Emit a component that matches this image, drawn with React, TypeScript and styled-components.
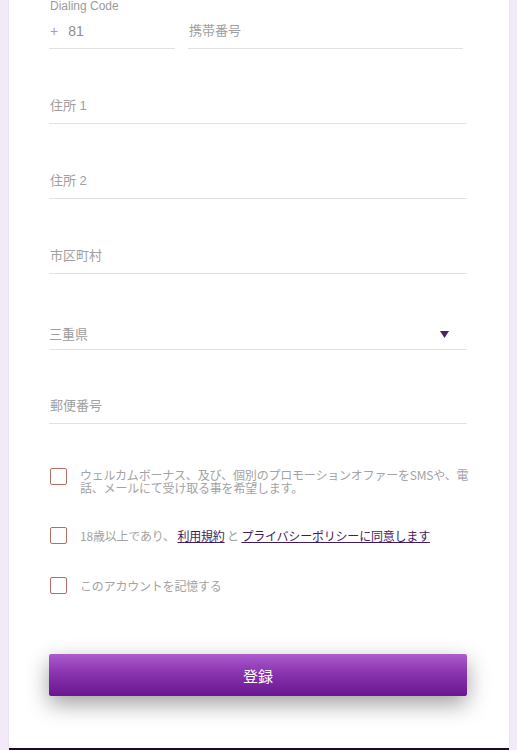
import styled, { createGlobalStyle } from 'styled-components';

const GlobalStyle = createGlobalStyle`
  html, body {
    margin: 0;
    padding: 0;
    background: #f3eaf9;
  }
  body {
    font-family: "Liberation Sans", "Noto Sans CJK JP", sans-serif;
    overflow: hidden;
  }
`;

const Panel = styled.div`
  margin: -1px 8px 0 9px;
  background: #ffffff;
  padding: 0 42px 52px 40px;
  box-shadow: 0 0 2px rgba(120, 80, 150, 0.15);
`;

const Footer = styled.div`
  margin: 0 8px 0 9px;
  height: 20px;
  background: #1b0b26;
`;

const Form = styled.form`
  display: flex;
  flex-direction: column;
`;

const SmallLabel = styled.div`
  font-size: 12px;
  line-height: 14px;
  color: #9b9b9b;
  padding-left: 1px;
`;

const PhoneRow = styled.div`
  display: flex;
  gap: 13px;
  width: 414px;
`;

const Field = styled.div<{ $width?: number; $top?: number }>`
  position: relative;
  display: flex;
  align-items: center;
  height: 36px;
  min-width: 0;
  margin-top: ${(p) => p.$top ?? 39}px;
  box-sizing: border-box;
  border-bottom: 1px solid #e3e1e4;
  flex: ${(p) => (p.$width ? `0 0 ${p.$width}px` : '1 1 auto')};
`;

const Prefix = styled.span`
  font-size: 14px;
  color: #a3a3a3;
  padding: 0 9px 0 1px;
`;

const Input = styled.input<{ $filled?: boolean }>`
  flex: 1;
  min-width: 0;
  width: 0;
  border: none;
  outline: none;
  background: transparent;
  padding: 0 0 0 1px;
  font-family: "Liberation Sans", "Noto Sans CJK JP", sans-serif;
  font-size: ${(p) => (p.$filled ? 14 : 13)}px;
  color: #8f8f8f;
  &::placeholder {
    color: #a0a0a0;
  }
`;

const Select = styled.select`
  flex: 1;
  appearance: none;
  border: none;
  outline: none;
  background: transparent;
  padding: 5px 0 0 0;
  font-family: "Liberation Sans", "Noto Sans CJK JP", sans-serif;
  font-size: 13px;
  color: #9d9d9d;
`;

const Arrow = styled.svg`
  position: absolute;
  right: 18px;
  top: 17px;
  pointer-events: none;
`;

const Checks = styled.div`
  display: flex;
  flex-direction: column;
  gap: 33px;
  margin-top: 44px;
`;

const CheckRow = styled.label<{ $multi?: boolean }>`
  display: flex;
  align-items: ${(p) => (p.$multi ? 'flex-start' : 'center')};
  gap: 13px;
  padding-left: 1px;
`;

const Box = styled.input`
  appearance: none;
  box-sizing: border-box;
  margin: 0;
  flex: 0 0 auto;
  width: 17px;
  height: 17px;
  border: 1.5px solid #b66f62;
  border-radius: 2px;
  background: #fff;
`;

const CheckText = styled.span`
  font-family: "Noto Sans CJK JP", sans-serif;
  font-size: 12px;
  line-height: 13px;
  color: #a3a3a3;
  margin-right: -10px;
  letter-spacing: -0.2px;
`;

const Link = styled.a`
  color: #3e1b5c;
  text-decoration: underline;
  cursor: pointer;
`;

const Submit = styled.button`
  margin-top: 60px;
  height: 42px;
  border: none;
  border-radius: 2px;
  background: linear-gradient(to bottom, #ab5ccd 0%, #8a34b0 45%, #68168f 100%);
  color: #ffffff;
  font-family: "Noto Sans CJK JP", sans-serif;
  font-size: 15px;
  box-shadow: 0 8px 22px rgba(0, 0, 0, 0.38);
  cursor: pointer;
`;

export default function App() {
  return (
    <>
      <GlobalStyle />
      <Panel>
        <Form onSubmit={(e) => e.preventDefault()}>
          <SmallLabel>Dialing Code</SmallLabel>
          <PhoneRow>
            <Field $width={126} $top={0}>
              <Prefix>+</Prefix>
              <Input $filled defaultValue="81" />
            </Field>
            <Field $top={0}>
              <Input placeholder="携帯番号" />
            </Field>
          </PhoneRow>
          <Field>
            <Input placeholder="住所 1" />
          </Field>
          <Field>
            <Input placeholder="住所 2" />
          </Field>
          <Field>
            <Input placeholder="市区町村" />
          </Field>
          <Field $top={40}>
            <Select defaultValue="三重県">
              <option>三重県</option>
            </Select>
            <Arrow width="9" height="7" viewBox="0 0 9 7">
              <path d="M0 0 L9 0 L4.5 7 Z" fill="#4b2468" />
            </Arrow>
          </Field>
          <Field $top={38}>
            <Input placeholder="郵便番号" />
          </Field>
          <Checks>
            <CheckRow $multi>
              <Box type="checkbox" />
              <CheckText>
                ウェルカムボーナス、及び、個別のプロモーションオファーをSMSや、電話、メールにて受け取る事を希望します。
              </CheckText>
            </CheckRow>
            <CheckRow>
              <Box type="checkbox" />
              <CheckText>
                18歳以上であり、 <Link>利用規約</Link> と <Link>プライバシーポリシーに同意します</Link>
              </CheckText>
            </CheckRow>
            <CheckRow>
              <Box type="checkbox" />
              <CheckText>このアカウントを記憶する</CheckText>
            </CheckRow>
          </Checks>
          <Submit type="submit">登録</Submit>
        </Form>
      </Panel>
      <Footer />
    </>
  );
}
